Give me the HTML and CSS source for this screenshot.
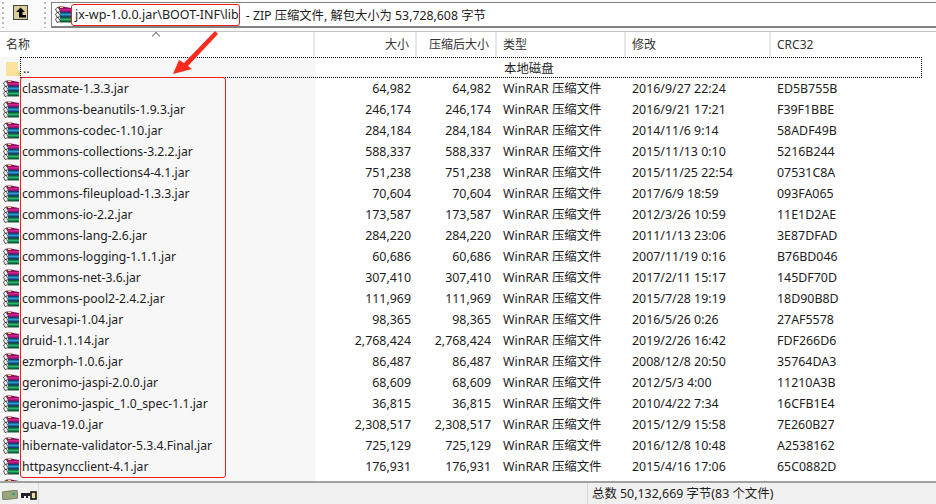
FILE: index.html
```html
<!DOCTYPE html>
<html lang="zh-CN">
<head>
    <meta charset="UTF-8">
    <title>jx-wp-1.0.0.jar - WinRAR</title>
    <link rel="stylesheet" href="styles.css">
</head>
<body>

<svg class="defs" width="0" height="0">
    <symbol id="rar" viewBox="0 0 16 17">
        <path d="M3 0.5 L8 0.5 L16 2 L16 6 L5 6 Z" fill="#8c1464"/>
        <path d="M5 1 L8 1 L8 2 L5 2 Z" fill="#e8d84a"/>
        <path d="M5 3 L16 3 L16 4.6 L5 4.6 Z" fill="#d81f8f"/>
        <path d="M5 6 L16 6 L16 11 L5 11 Z" fill="#123f7e"/>
        <path d="M5 7.5 L16 7.5 L16 9.5 L5 9.5 Z" fill="#2a9fc9"/>
        <path d="M5 11 L16 11 L16 16.5 L5 16.5 Z" fill="#0d5a35"/>
        <path d="M5 12.5 L16 12.5 L16 14.5 L5 14.5 Z" fill="#2bb673"/>
        <path d="M0.5 3 L3 1 L5.5 5.5 L2 6.5 Z M0.5 8 L3 6 L5.5 10.5 L2 11.5 Z M0.5 13 L3 11 L5.5 15.5 L2 16.5 Z" fill="#f4f4f4" stroke="#333" stroke-width=".8"/>
    </symbol>
</svg>

<div class="toolbar">
    <div class="grip"></div>
    <div class="up-btn">
        <svg width="15" height="15" viewBox="0 0 15 15">
            <rect x=".5" y=".5" width="14" height="14" fill="#d8cf9a" stroke="#444"/>
            <path d="M7.5 2.5 L12 7 L9.5 7 L9.5 10 L13 10 L13 12.5 L6 12.5 L6 7 L3 7 Z" fill="#000"/>
        </svg>
    </div>
    <div class="grip grip-right"></div>
    <div class="address">
        <svg class="file-icon" width="16" height="17"><use href="#rar"/></svg>
        <span class="path">jx-wp-1.0.0.jar\BOOT-INF\lib</span>
        <span class="path-info">- ZIP 压缩文件, 解包大小为 53,728,608 字节</span>
    </div>
</div>

<div class="head row-grid">
    <div class="col col-name">名称<span class="sort-mark"></span></div>
    <div class="col right">大小</div>
    <div class="col right">压缩后大小</div>
    <div class="col">类型</div>
    <div class="col">修改</div>
    <div class="col">CRC32</div>
</div>

<div class="list">
    <div class="row row-grid row-up">
        <div class="name">
            <svg class="folder" width="16" height="16" viewBox="0 0 16 16"><path d="M1 2 Q1 1 2 1 L13 1 L13 15 L2 15 Q1 15 1 14 Z" fill="#fbe29a"/><path d="M13 10 L15 10 L15 15 L13 15 Z" fill="#f2d27a"/></svg>
            <span>..</span>
        </div>
        <div></div><div></div><div class="cell">本地磁盘</div><div></div><div></div>
    </div>
    <div class="row row-grid"><div class="name"><svg width="16" height="17"><use href="#rar"/></svg><span>classmate-1.3.3.jar</span></div><div class="cell right">64,982</div><div class="cell right">64,982</div><div class="cell">WinRAR 压缩文件</div><div class="cell">2016/9/27 22:24</div><div class="cell">ED5B755B</div></div>
    <div class="row row-grid"><div class="name"><svg width="16" height="17"><use href="#rar"/></svg><span>commons-beanutils-1.9.3.jar</span></div><div class="cell right">246,174</div><div class="cell right">246,174</div><div class="cell">WinRAR 压缩文件</div><div class="cell">2016/9/21 17:21</div><div class="cell">F39F1BBE</div></div>
    <div class="row row-grid"><div class="name"><svg width="16" height="17"><use href="#rar"/></svg><span>commons-codec-1.10.jar</span></div><div class="cell right">284,184</div><div class="cell right">284,184</div><div class="cell">WinRAR 压缩文件</div><div class="cell">2014/11/6 9:14</div><div class="cell">58ADF49B</div></div>
    <div class="row row-grid"><div class="name"><svg width="16" height="17"><use href="#rar"/></svg><span>commons-collections-3.2.2.jar</span></div><div class="cell right">588,337</div><div class="cell right">588,337</div><div class="cell">WinRAR 压缩文件</div><div class="cell">2015/11/13 0:10</div><div class="cell">5216B244</div></div>
    <div class="row row-grid"><div class="name"><svg width="16" height="17"><use href="#rar"/></svg><span>commons-collections4-4.1.jar</span></div><div class="cell right">751,238</div><div class="cell right">751,238</div><div class="cell">WinRAR 压缩文件</div><div class="cell">2015/11/25 22:54</div><div class="cell">07531C8A</div></div>
    <div class="row row-grid"><div class="name"><svg width="16" height="17"><use href="#rar"/></svg><span>commons-fileupload-1.3.3.jar</span></div><div class="cell right">70,604</div><div class="cell right">70,604</div><div class="cell">WinRAR 压缩文件</div><div class="cell">2017/6/9 18:59</div><div class="cell">093FA065</div></div>
    <div class="row row-grid"><div class="name"><svg width="16" height="17"><use href="#rar"/></svg><span>commons-io-2.2.jar</span></div><div class="cell right">173,587</div><div class="cell right">173,587</div><div class="cell">WinRAR 压缩文件</div><div class="cell">2012/3/26 10:59</div><div class="cell">11E1D2AE</div></div>
    <div class="row row-grid"><div class="name"><svg width="16" height="17"><use href="#rar"/></svg><span>commons-lang-2.6.jar</span></div><div class="cell right">284,220</div><div class="cell right">284,220</div><div class="cell">WinRAR 压缩文件</div><div class="cell">2011/1/13 23:06</div><div class="cell">3E87DFAD</div></div>
    <div class="row row-grid"><div class="name"><svg width="16" height="17"><use href="#rar"/></svg><span>commons-logging-1.1.1.jar</span></div><div class="cell right">60,686</div><div class="cell right">60,686</div><div class="cell">WinRAR 压缩文件</div><div class="cell">2007/11/19 0:16</div><div class="cell">B76BD046</div></div>
    <div class="row row-grid"><div class="name"><svg width="16" height="17"><use href="#rar"/></svg><span>commons-net-3.6.jar</span></div><div class="cell right">307,410</div><div class="cell right">307,410</div><div class="cell">WinRAR 压缩文件</div><div class="cell">2017/2/11 15:17</div><div class="cell">145DF70D</div></div>
    <div class="row row-grid"><div class="name"><svg width="16" height="17"><use href="#rar"/></svg><span>commons-pool2-2.4.2.jar</span></div><div class="cell right">111,969</div><div class="cell right">111,969</div><div class="cell">WinRAR 压缩文件</div><div class="cell">2015/7/28 19:19</div><div class="cell">18D90B8D</div></div>
    <div class="row row-grid"><div class="name"><svg width="16" height="17"><use href="#rar"/></svg><span>curvesapi-1.04.jar</span></div><div class="cell right">98,365</div><div class="cell right">98,365</div><div class="cell">WinRAR 压缩文件</div><div class="cell">2016/5/26 0:26</div><div class="cell">27AF5578</div></div>
    <div class="row row-grid"><div class="name"><svg width="16" height="17"><use href="#rar"/></svg><span>druid-1.1.14.jar</span></div><div class="cell right">2,768,424</div><div class="cell right">2,768,424</div><div class="cell">WinRAR 压缩文件</div><div class="cell">2019/2/26 16:42</div><div class="cell">FDF266D6</div></div>
    <div class="row row-grid"><div class="name"><svg width="16" height="17"><use href="#rar"/></svg><span>ezmorph-1.0.6.jar</span></div><div class="cell right">86,487</div><div class="cell right">86,487</div><div class="cell">WinRAR 压缩文件</div><div class="cell">2008/12/8 20:50</div><div class="cell">35764DA3</div></div>
    <div class="row row-grid"><div class="name"><svg width="16" height="17"><use href="#rar"/></svg><span>geronimo-jaspi-2.0.0.jar</span></div><div class="cell right">68,609</div><div class="cell right">68,609</div><div class="cell">WinRAR 压缩文件</div><div class="cell">2012/5/3 4:00</div><div class="cell">11210A3B</div></div>
    <div class="row row-grid"><div class="name"><svg width="16" height="17"><use href="#rar"/></svg><span>geronimo-jaspic_1.0_spec-1.1.jar</span></div><div class="cell right">36,815</div><div class="cell right">36,815</div><div class="cell">WinRAR 压缩文件</div><div class="cell">2010/4/22 7:34</div><div class="cell">16CFB1E4</div></div>
    <div class="row row-grid"><div class="name"><svg width="16" height="17"><use href="#rar"/></svg><span>guava-19.0.jar</span></div><div class="cell right">2,308,517</div><div class="cell right">2,308,517</div><div class="cell">WinRAR 压缩文件</div><div class="cell">2015/12/9 15:58</div><div class="cell">7E260B27</div></div>
    <div class="row row-grid"><div class="name"><svg width="16" height="17"><use href="#rar"/></svg><span>hibernate-validator-5.3.4.Final.jar</span></div><div class="cell right">725,129</div><div class="cell right">725,129</div><div class="cell">WinRAR 压缩文件</div><div class="cell">2016/12/8 10:48</div><div class="cell">A2538162</div></div>
    <div class="row row-grid"><div class="name"><svg width="16" height="17"><use href="#rar"/></svg><span>httpasyncclient-4.1.jar</span></div><div class="cell right">176,931</div><div class="cell right">176,931</div><div class="cell">WinRAR 压缩文件</div><div class="cell">2015/4/16 17:06</div><div class="cell">65C0882D</div></div>
    <div class="row row-grid"><div class="name"><svg width="16" height="17"><use href="#rar"/></svg></div></div>
</div>

<div class="status">
    <div class="status-icons">
        <svg width="16" height="10" viewBox="0 0 16 10"><path d="M0 2 L15 0 L16 8 L1 10 Z" fill="#9aa57a" stroke="#6b7256" stroke-width=".8"/><rect x="10" y="3" width="3" height="2" fill="#2c9a8e"/></svg>
        <svg width="16" height="9" viewBox="0 0 16 9"><path d="M0 2 H9 V5 H7 V7 H5 V5 H3 V7 H0 Z" fill="#222"/><rect x="10" y="1" width="5" height="7" fill="#e8dca0" stroke="#111" stroke-width="1.6"/></svg>
    </div>
    <div class="status-mid"></div>
    <div class="status-total">总数 50,132,669 字节(83 个文件)</div>
</div>

<!-- 红色标注 -->
<div class="mark mark-path"></div>
<div class="mark mark-list"></div>
<svg class="arrow" width="50" height="46" viewBox="0 0 50 46">
    <path d="M45 1 L48 4 L18 36 L22 39 L3 44 L9 30 L14 33 Z" fill="#fb2a1c"/>
</svg>

</body>
</html>
```

FILE: styles.css
```css
html, body {
    margin: 0;
    height: 504px;
    overflow: hidden;
}
body {
    position: relative;
    background: white;
    color: #1c1c1c;
    font-family: "Noto Sans", "Noto Sans CJK SC", sans-serif;
    font-size: 12.4px;
    display: flex;
    flex-direction: column;
}
.defs {
    position: absolute;
}
.toolbar {
    height: 32px;
    box-sizing: border-box;
    display: flex;
    align-items: flex-start;
    padding-top: 2px;
    border-bottom: 1px solid #c4c4c4;
    background: #fafafa;
}
.grip {
    width: 2px;
    height: 26px;
    margin-left: 2px;
    background: repeating-linear-gradient(to bottom, #b8b8b8 0 2px, transparent 2px 5px);
}
.grip-right {
    margin-left: 16px;
}
.up-btn {
    margin: 3px 0 0 9px;
    height: 15px;
}
.address {
    flex: 1;
    height: 26px;
    box-sizing: border-box;
    margin-left: 5px;
    padding-left: 3px;
    background: white;
    border-top: 1px solid #808080;
    border-left: 1px solid #808080;
    border-bottom: 2px solid #808080;
    display: flex;
    align-items: center;
    white-space: nowrap;
}
.file-icon {
    flex: none;
}
.path {
    margin-left: 4px;
    font-size: 12.5px;
}
.path-info {
    margin-left: 7px;
    font-size: 12.3px;
}
.row-grid {
    display: grid;
    grid-template-columns: 315px 102px 80px 129px 145px 165px;
}
.head {
    height: 25px;
    box-sizing: border-box;
    color: #333;
    background: white;
    font-size: 12px;
}
.col {
    position: relative;
    padding: 4px 6px 0 6px;
    border-right: 2px solid #e8e8e8;
    line-height: 17px;
}
.col:last-child {
    border-right: none;
}
.sort-mark {
    position: absolute;
    left: 153px;
    top: 1px;
    width: 5px;
    height: 5px;
    border-left: 1px solid #777;
    border-top: 1px solid #777;
    transform: rotate(45deg);
}
.right {
    text-align: right;
}
.list {
    flex: 1;
    overflow: hidden;
    background: linear-gradient(to right, #f7f7f7 315px, white 315px);
}
.row {
    height: 21px;
    align-items: center;
    line-height: 21px;
}
.row-up {
    box-sizing: border-box;
    width: 902px;
    margin-left: 20px;
    grid-template-columns: 295px 102px 80px 129px 145px 151px;
    border: 1px dotted #000;
}
.row-up .folder {
    position: absolute;
    left: 5px;
}
.name {
    display: flex;
    align-items: center;
    padding-left: 3px;
    gap: 3px;
    white-space: nowrap;
}
.name span {
    font-size: 12.2px;
}
.row-up .name {
    padding-left: 2px;
}
.cell {
    padding-left: 6px;
    white-space: nowrap;
}
.cell.right {
    padding: 0 6px 0 0;
}
.status {
    height: 23px;
    box-sizing: border-box;
    display: flex;
    background: #f0f0f0;
    border-top: 2px solid #a0a0a0;
}
.status-icons {
    width: 39px;
    display: flex;
    align-items: center;
    padding: 3px 0 0 2px;
    gap: 3px;
    box-sizing: border-box;
    border-right: 1px solid #d8d8d8;
}
.status-mid {
    width: 548px;
    border-right: 1px solid #d8d8d8;
}
.status-total {
    padding-left: 4px;
    line-height: 21px;
}
.mark {
    position: absolute;
    box-sizing: border-box;
    border: 1px solid #f01c1c;
    border-radius: 3px;
}
.mark-path {
    left: 71px;
    top: 4px;
    width: 169px;
    height: 22px;
}
.mark-list {
    left: 20px;
    top: 77px;
    width: 206px;
    height: 401px;
}
.arrow {
    position: absolute;
    left: 170px;
    top: 30px;
}
```
